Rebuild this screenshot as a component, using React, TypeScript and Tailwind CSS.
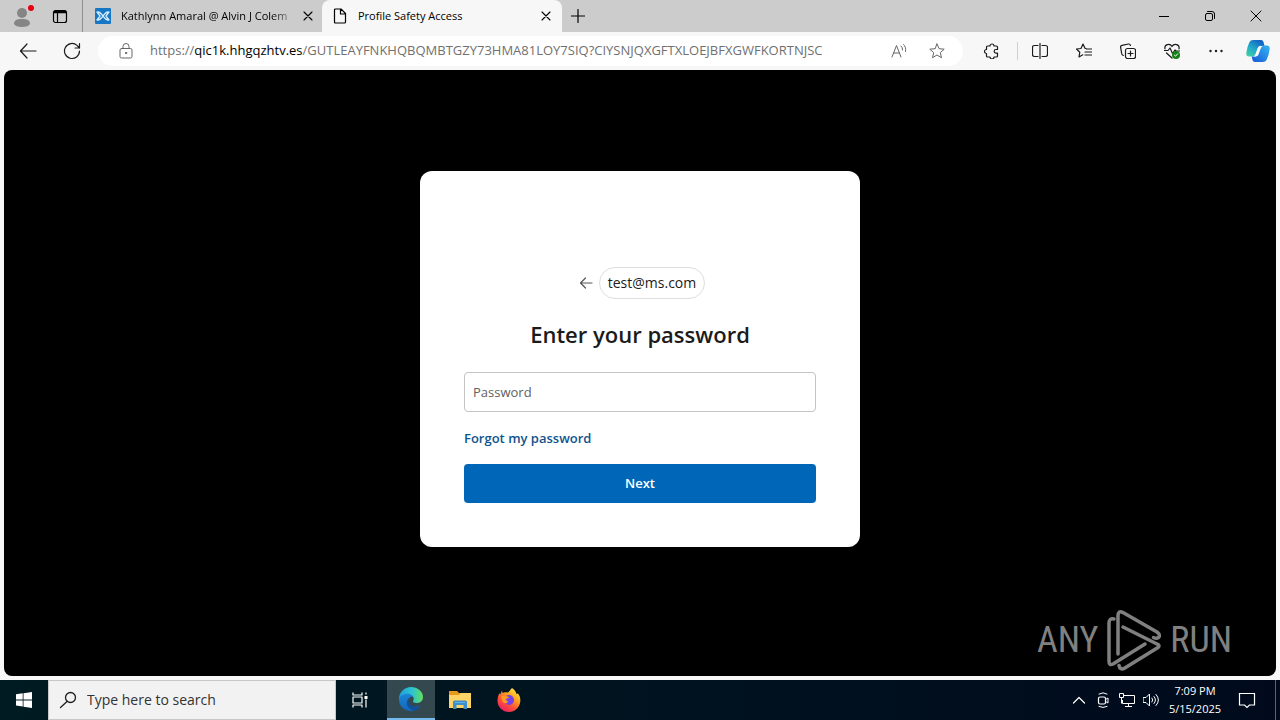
import type { ReactNode } from 'react';

interface IconProps {
  size?: number;
  className?: string;
  children: ReactNode;
}

function Icon({ size = 16, className = '', children }: IconProps) {
  return (
    <svg
      width={size}
      height={size}
      viewBox={`0 0 ${size} ${size}`}
      fill="none"
      stroke="currentColor"
      strokeLinecap="round"
      strokeLinejoin="round"
      className={`shrink-0 ${className}`}
      aria-hidden="true"
    >
      {children}
    </svg>
  );
}

function CloseIcon() {
  return (
    <Icon size={10}>
      <path d="M1 1l8 8M9 1l-8 8" strokeWidth="1.1" />
    </Icon>
  );
}

function TabStrip() {
  return (
    <div className="flex h-8 items-stretch bg-[#cccccc] text-black">
      <button className="flex w-11 items-center justify-center" aria-label="Profile">
        <Icon size={24}>
          <circle cx="12" cy="9" r="5" fill="#858585" stroke="none" />
          <path d="M4 20c0-4 3-5 8-5s8 1 8 5c-1 2-4 3-8 3s-7-1-8-3z" fill="#858585" stroke="none" />
          <circle cx="21" cy="4" r="3" fill="#e60012" stroke="none" />
        </Icon>
      </button>
      <button className="flex w-8 items-center justify-center" aria-label="Tab actions">
        <Icon>
          <rect x="1.5" y="2.5" width="13" height="12" rx="2" strokeWidth="1.2" />
          <path d="M2 4h12" strokeWidth="2.5" strokeLinecap="butt" />
          <path d="M5.500 5v9" strokeWidth="1.2" />
        </Icon>
      </button>
      <div className="ml-1.5 flex w-60 items-center border-l border-[#8f8f8f] pr-1 pl-3">
        <Icon>
          <rect width="16" height="16" rx="1" fill="#1777c4" stroke="none" />
          <path d="M2 4l3 4-3 4M14 4l-3 4 3 4M3 4c4 0 6 8 10 8M3 12c4 0 6-8 10-8" stroke="#d6edff" strokeWidth="1.3" />
        </Icon>
        <span className="ml-2.5 flex-1 mask-r-from-85% text-[11px] whitespace-nowrap">
          Kathlynn Amaral @ Alvin J Colem
        </span>
        <button className="flex size-5 items-center justify-center" aria-label="Close tab">
          <CloseIcon />
        </button>
      </div>
      <div className="flex w-60 items-center rounded-t-lg bg-[#f7f7f7] pr-1.5 pl-2.5">
        <Icon>
          <path d="M3.500 1h5.500l4.500 4.500v8.500q0 1-1 1h-9q-1 0-1-1v-12q0-1 1-1zM8.500 1v5h5" strokeWidth="1.2" />
        </Icon>
        <span className="ml-2.5 flex-1 text-[11px] whitespace-nowrap">Profile Safety Access</span>
        <button className="flex size-5 items-center justify-center" aria-label="Close tab">
          <CloseIcon />
        </button>
      </div>
      <button className="flex w-8 items-center justify-center" aria-label="New tab">
        <Icon size={14}>
          <path d="M7 .5v13M.5 7h13" strokeWidth="1.2" />
        </Icon>
      </button>
      <div className="ml-auto flex">
        <button className="flex w-12 items-center justify-center" aria-label="Minimize">
          <Icon size={10}>
            <path d="M0 5.500h10" />
          </Icon>
        </button>
        <button className="flex w-11 items-center justify-center" aria-label="Restore">
          <Icon size={12}>
            <rect x="1.500" y="3.500" width="7" height="7" rx="1.500" />
            <path d="M3.500 1.500h4.500q2.500 0 2.500 2.500v4.500" />
          </Icon>
        </button>
        <button className="flex w-12 items-center justify-center" aria-label="Close window">
          <Icon size={12}>
            <path d="M1 1l10 10M11 1L1 11" />
          </Icon>
        </button>
      </div>
    </div>
  );
}

function ToolbarButton({ label, children }: { label: string; children: ReactNode }) {
  return (
    <button className="flex w-11 shrink-0 items-center justify-center" aria-label={label}>
      {children}
    </button>
  );
}

function Toolbar() {
  return (
    <div className="flex h-[38px] items-stretch bg-[#f7f7f7] pr-0.5 pl-1.5 text-[#1b1b1b]">
      <ToolbarButton label="Back">
        <Icon size={18}>
          <path d="M17 9H1.500M8 2L1.500 9 8 16" strokeWidth="1.2" />
        </Icon>
      </ToolbarButton>
      <ToolbarButton label="Refresh">
        <Icon size={18}>
          <path d="M16.500 9a7.500 7.500 0 1 1-2.500-5.600L16.500 6M16.500 1.500V6H12" strokeWidth="1.2" />
        </Icon>
      </ToolbarButton>
      <div className="my-1 ml-1 flex min-w-0 flex-1 items-center rounded-full bg-white pr-2 pl-5">
        <Icon className="text-[#666]">
          <rect x="2" y="5.500" width="12" height="9.500" rx="1.500" />
          <path d="M5 5.500V3.500a3 3 0 0 1 6 0v2" />
          <circle cx="8" cy="10" r=".7" fill="currentColor" />
        </Icon>
        <div className="ml-4 min-w-0 flex-1 overflow-hidden text-[13px] whitespace-nowrap text-[#707070]">
          https://<span className="text-black">qic1k.hhgqzhtv.es</span>
          /GUTLEAYFNKHQBQMBTGZY73HMA81LOY7SIQ?CIYSNJQXGFTXLOEJBFXGWFKORTNJSC
        </div>
        <button className="flex w-10 items-center justify-center text-[#666]" aria-label="Read aloud">
          <Icon>
            <path d="M1 14L5.500 2.500 10 14M2.500 10h6M10 3q2 1.500 1.500 4M12.500 1.500q3 2.500 2 7" />
          </Icon>
        </button>
        <button className="flex w-9 items-center justify-center text-[#666]" aria-label="Add to favorites">
          <Icon>
            <path d="M8 1l2.100 4.700 5.100.5-3.900 3.400 1.200 5.100L8 12l-4.500 2.700 1.200-5.100L.8 6.200l5.100-.5z" />
          </Icon>
        </button>
      </div>
      <div className="ml-1.5 flex">
        <ToolbarButton label="Extensions">
          <Icon>
            <path d="M4.500 3H7a2 2 0 0 1 4 0h2.500q1 0 1 1v2.500H13a1.800 1.800 0 0 0 0 3.600h1.500v2.900q0 1-1 1H11a2 2 0 0 1-4 0H4.500q-1 0-1-1v-2.500a2 2 0 0 1 0-4V4q0-1 1-1z" strokeWidth="1.2" />
          </Icon>
        </ToolbarButton>
        <div className="my-2.5 ml-1 w-px bg-[#cfcfcf]" />
        <ToolbarButton label="Split screen">
          <Icon>
            <path d="M6 2.500H2.500q-2 0-2 2v7q0 2 2 2H6M10 2.500h3.500q2 0 2 2v7q0 2-2 2H10M8 .5v15" strokeWidth="1.2" />
          </Icon>
        </ToolbarButton>
        <ToolbarButton label="Favorites">
          <Icon>
            <path d="M10 5.500L9 5.300 7 1 5 5.500.5 6l3.300 3.200L3 14l3.800-2.200M10.500 6h5M9 9h6.500M9 12h6.500" strokeWidth="1.2" />
          </Icon>
        </ToolbarButton>
        <ToolbarButton label="Collections">
          <Icon>
            <rect x="5.500" y="5.500" width="10" height="10" rx="2" strokeWidth="1.2" />
            <path d="M10.500 8v5M8 10.500h5M3.500 12.500q-1.500-.3-1.800-1.800L.6 4.200Q.4 2.600 2 2.300L8.500 1q1.600-.2 2 1.500" strokeWidth="1.2" />
          </Icon>
        </ToolbarButton>
        <ToolbarButton label="Browser essentials">
          <Icon>
            <path d="M1 6c-1-5 5-6 7-2.500C10 0 16 1 15 6M2.500 10L8 15M0 7.500h4L6 5l2.500 5.500L11 7l1 1h3.500" strokeWidth="1.2" />
            <circle cx="12" cy="12" r="4" fill="#158015" stroke="none" />
            <path d="M10.300 12l1.200 1.200 2.200-2.400" stroke="#fff" />
          </Icon>
        </ToolbarButton>
        <ToolbarButton label="Settings and more">
          <Icon>
            <g fill="currentColor" stroke="none">
              <circle cx="2.500" cy="8" r="1.200" />
              <circle cx="8" cy="8" r="1.200" />
              <circle cx="13.500" cy="8" r="1.200" />
            </g>
          </Icon>
        </ToolbarButton>
        <button className="flex w-10 items-center justify-center" aria-label="Copilot">
          <CopilotLogo />
        </button>
      </div>
    </div>
  );
}

function CopilotLogo() {
  return (
    <svg width="24" height="24" viewBox="0 0 24 24" aria-hidden="true">
      <defs>
        <linearGradient id="copilotLeft" x1="0" y1="1" x2=".7" y2="0">
          <stop offset="0" stopColor="#45d6a0" />
          <stop offset=".5" stopColor="#20a9cb" />
          <stop offset="1" stopColor="#1261c4" />
        </linearGradient>
        <linearGradient id="copilotRight" x1="0" y1="1" x2="1" y2="0">
          <stop offset="0" stopColor="#1557d8" />
          <stop offset="1" stopColor="#36b7f2" />
        </linearGradient>
      </defs>
      <path d="M7 1h8q2 0 2.500 2l1 4h-4q-2 0-2.700 2L9.500 16q-.6 1.500-2.500 1.500H3q-3 0-2.700-3.500Q1 8 3.500 3 4.500 1 7 1z" fill="url(#copilotLeft)" />
      <path d="M17 23H9q-2 0-2.500-2l-.8-3.500H9q2.300 0 3-2.500l2.500-7q.5-1.500 2.500-1.500h4q3 0 2.700 3.500Q23 16 20.500 21 19.500 23 17 23z" fill="url(#copilotRight)" />
      <path d="M14.500 7h2.200q-1.500.8-2.200 3l-2 5.500q-.7 2-3 2H7.300q1.500-.6 2.200-2.500l2.300-6Q12.500 7 14.500 7z" fill="#f7f7f7" />
    </svg>
  );
}

function SignInCard() {
  return (
    <form
      className="flex w-full max-w-[440px] flex-col rounded-xl bg-white px-11 pt-24 pb-11 text-[#1b1b1b]"
      onSubmit={(e) => e.preventDefault()}
    >
      <div className="flex items-center justify-center gap-1.5 pl-1">
        <button type="button" className="text-[#555]" aria-label="Back">
          <Icon size={14}>
            <path d="M13 7H1.500M6.500 2l-5 5 5 5" strokeWidth="1.2" />
          </Icon>
        </button>
        <span className="flex h-8 items-center rounded-full border border-[#dedede] px-2 text-sm">test@ms.com</span>
      </div>
      <h1 className="mt-5 text-center text-[22px] leading-[30px] font-semibold">Enter your password</h1>
      <input
        type="password"
        placeholder="Password"
        aria-label="Password"
        className="mt-[23px] h-10 rounded-[4px] border border-[#c4c4c4] px-2 text-[13px] outline-none placeholder:text-[#616161]"
      />
      <a href="#" className="mt-4 self-start text-[13px] leading-5 font-semibold text-[#0f548c]">
        Forgot my password
      </a>
      <button type="submit" className="mt-4 h-[39px] rounded-[4px] bg-[#0067b8] text-[13px] font-semibold text-white">
        Next
      </button>
    </form>
  );
}

function Watermark() {
  return (
    <div className="absolute right-11 bottom-1 flex h-16 items-center gap-2 font-['Roboto_Condensed','Liberation_Sans',sans-serif] text-4xl text-[#808080]">
      <span>ANY</span>
      <svg width="56" height="64" viewBox="0 0 56 64" fill="none" stroke="currentColor" strokeWidth="3.5" strokeLinejoin="round" strokeLinecap="round" aria-hidden="true">
        <path d="M8 11q-5-1-5 4v38q0 5 4 3L39 36" />
        <path d="M12 46V8q0-6 5-3.500L51 24q4 3 1.500 5.500-2 1.500-5 0" />
        <path d="M17 19l35 17.500q2 1.500 0 3L18 60.500q-4 1.500-5-3" />
      </svg>
      <span>RUN</span>
    </div>
  );
}

function Taskbar() {
  return (
    <div className="flex h-10 items-stretch bg-linear-to-r from-[#001b22] to-[#000a1c] text-white">
      <button className="flex w-12 items-center justify-center" aria-label="Start">
        <Icon>
          <path d="M0 2.300l6.700-1v6.200H0zM7.500 1.200L16 0v7.500H7.500zM0 8.400h6.700v6.200L0 13.600zM7.500 8.400H16V16l-8.500-1.200z" fill="#fff" stroke="none" />
        </Icon>
      </button>
      <label className="flex w-72 items-center border border-[#c8c8c8] bg-[#f2f2f2] pl-2.5 text-[#1f1f1f]">
        <Icon size={18}>
          <circle cx="11.500" cy="6.500" r="5" strokeWidth="1.3" />
          <path d="M8 10.500L1.500 16.500" strokeWidth="1.3" />
        </Icon>
        <input
          type="text"
          placeholder="Type here to search"
          aria-label="Type here to search"
          className="ml-2.5 w-full bg-transparent text-sm outline-none placeholder:text-[#333]"
        />
      </label>
      <button className="flex w-12 items-center justify-center" aria-label="Task view">
        <Icon>
          <path d="M1 .5v2.500h9V.5M1 15.500V13h9v2.500M1 5h9v6H1zM14 .5v2M14 7.500v8" strokeLinecap="butt" strokeWidth="1.2" />
          <rect x="12.500" y="4" width="3" height="3" fill="#fff" stroke="none" />
        </Icon>
      </button>
      <div className="ml-[3px] flex gap-px">
        <button className="flex w-12 items-center justify-center border-b-2 border-[#76b9ed] bg-[#33484f]" aria-label="Microsoft Edge">
          <EdgeLogo />
        </button>
        <button className="flex w-12 items-center justify-center" aria-label="File Explorer">
          <svg width="22" height="20" viewBox="0 0 22 20" aria-hidden="true">
            <path d="M0 1h8l2 2h11v5H0z" fill="#e79b1c" />
            <path d="M0 5h10l1.500-2H22v15H0z" fill="#ffd466" />
            <path d="M4 19v-7q0-1.500 1.500-1.500h11Q18 10.500 18 12v7h-3.500v-4h-7v4z" fill="#3d8fc9" />
            <path d="M6 12.500h10" stroke="#62b3e4" />
          </svg>
        </button>
        <button className="flex w-12 items-center justify-center" aria-label="Firefox">
          <FirefoxLogo />
        </button>
      </div>
      <div className="ml-auto flex items-center">
        <button className="flex w-6 justify-center" aria-label="Show hidden icons">
          <Icon size={14}>
            <path d="M1.500 10L7 4.500l5.500 5.500" strokeWidth="1.2" />
          </Icon>
        </button>
        <button className="flex w-6 justify-center" aria-label="Meet now">
          <Icon>
            <rect x="3.500" y="5" width="7" height="7" rx="1.500" strokeWidth="1.2" />
            <path d="M10.500 7.500L13 6v5l-2.500-1.500M4 2q4-2.500 8 0M4 14.500q4 2 8 0" />
          </Icon>
        </button>
        <button className="flex w-6 justify-center" aria-label="Network">
          <Icon>
            <path d="M5 3.500h10.500v8H3.500V8M9.500 11.500v3M6 14.500h7M.5 1.500h4v4h-4zM2.500 5.500v6" strokeLinecap="butt" />
          </Icon>
        </button>
        <button className="flex w-6 justify-center" aria-label="Volume">
          <Icon>
            <path d="M.5 5.500H3L6.500 2v12L3 10.500H.5zM9 6q1.500 2 0 4M11 4.500q3 3.500 0 7M13 2.500q5 5.500 0 11" />
          </Icon>
        </button>
        <div className="w-16 text-center text-[11px] leading-[18px]">
          <div>7:09 PM</div>
          <div>5/15/2025</div>
        </div>
        <button className="flex w-10 justify-center" aria-label="Notifications">
          <Icon size={18}>
            <path d="M1.500 2.500h15v11.500h-5L9 16.500 6.500 14h-5z" strokeWidth="1.2" strokeLinejoin="miter" />
          </Icon>
        </button>
        <div className="ml-2 h-10 w-[5px] border-l border-[#5a6170]" />
      </div>
    </div>
  );
}

function EdgeLogo() {
  return (
    <svg width="24" height="24" viewBox="0 0 24 24" aria-hidden="true">
      <defs>
        <linearGradient id="edgeTop" x1="0" y1=".5" x2="1" y2=".5">
          <stop offset="0" stopColor="#1f9fdc" />
          <stop offset=".55" stopColor="#2fc3d0" />
          <stop offset="1" stopColor="#63e05a" />
        </linearGradient>
        <linearGradient id="edgeBody" x1="0" y1="0" x2="0" y2="1">
          <stop offset="0" stopColor="#1b86d8" />
          <stop offset="1" stopColor="#1167b8" />
        </linearGradient>
      </defs>
      <path d="M0 12C0 5 5.500 0 12 0s12 4.500 12 10c0 4-3 6-6.500 6-3 0-4-1.200-3.300-2.200C16 11 13.500 7.500 9 7.500 4 7.500 1 10 0 14z" fill="url(#edgeTop)" />
      <path d="M0 12.500C.5 9 4 6.800 8.500 6.800c3 0 5 1.400 5.700 3.200-3-1-6 1.500-5.200 5.500 1 4 6 6 12.500 3C19.500 22 16 24 12 24 5 24 0 19 0 12.500z" fill="url(#edgeBody)" />
      <path d="M9 12c-3 5 0 10.500 6 11.700 3-.7 5.300-2.500 6.500-5.200-6 3-12.500 0-12.500-6.500z" fill="#12509c" />
    </svg>
  );
}

function FirefoxLogo() {
  return (
    <svg width="24" height="24" viewBox="0 0 24 24" aria-hidden="true">
      <defs>
        <linearGradient id="firefoxFlame" x1=".85" y1="0" x2=".2" y2="1">
          <stop offset="0" stopColor="#fff04a" />
          <stop offset=".35" stopColor="#ffa51f" />
          <stop offset=".65" stopColor="#ff5136" />
          <stop offset="1" stopColor="#e21a6b" />
        </linearGradient>
      </defs>
      <path d="M15 0c3 2 4 4 4.500 6l1.500-.5c2 2.500 2.500 5 2.300 8C22.500 19.500 18 24 12 24 5.500 24 .5 19 .5 13c0-4 1-6 2-8l.5 2 2-4.500.5 2.500C7 4 9 4 10.500 4.500 12.500 4 13 2 15 0z" fill="url(#firefoxFlame)" />
      <circle cx="12" cy="12" r="5" fill="#7542e5" />
      <path d="M4 8.500c3-1.500 6-.5 8.500 1-2 .5-3.500 1-4 2.500 2 .5 3 1 2 2.500-1.500 1.500-4 1-5-1z" fill="#ff9a20" />
    </svg>
  );
}

export default function App() {
  return (
    <div className="flex min-h-screen flex-col bg-[#f7f7f7] font-['Open_Sans','Noto_Sans',sans-serif]">
      <TabStrip />
      <Toolbar />
      <main className="relative mx-1 mb-1 flex flex-1 items-center justify-center rounded-lg bg-black px-4 pb-7">
        <SignInCard />
        <Watermark />
      </main>
      <Taskbar />
    </div>
  );
}
